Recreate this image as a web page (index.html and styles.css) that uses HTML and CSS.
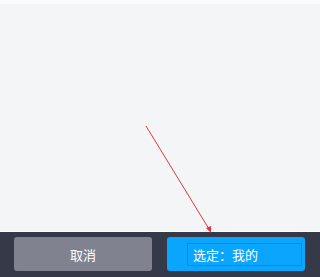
FILE: index.html
```html
<!DOCTYPE html>
<html>
<head>
<meta charset="utf-8">
<link rel="stylesheet" href="styles.css">
</head>
<body>
<div class="screen">
  <div class="topline"></div>
  <div class="content"></div>
  <div class="bar">
    <button class="btn cancel">取消</button>
    <button class="btn select"><span class="label">选定：我的</span></button>
  </div>
  <svg class="arrow" width="320" height="277" viewBox="0 0 320 277">
    <line x1="146" y1="126" x2="209" y2="229" stroke="#e0383e" stroke-width="1"/>
    <polygon points="211,233 206,228 211,226" fill="#e0383e"/>
  </svg>
</div>
</body>
</html>
```
FILE: styles.css
```css
html, body {
  margin: 0;
  padding: 0;
}
body {
  width: 320px;
  height: 277px;
  overflow: hidden;
  font-family: "Noto Sans CJK SC", "Noto Sans", sans-serif;
}
.screen {
  position: relative;
  width: 320px;
  height: 277px;
  display: flex;
  flex-direction: column;
  background: #f4f5f7;
}
.topline {
  height: 4px;
  background: #fbfbfc;
}
.content {
  flex: 1;
  background: #f4f5f7;
  border-bottom: 1px solid #ffffff;
}
.bar {
  height: 45px;
  background: #363a48;
  display: grid;
  grid-template-columns: 1fr 1fr;
  gap: 15px;
  padding: 5px 15px 6px 14px;
  box-sizing: border-box;
}
.btn {
  min-width: 0;
  border: none;
  border-radius: 3px;
  color: #ffffff;
  font-family: "Noto Sans CJK SC", "Noto Sans", sans-serif;
  font-size: 13px;
  padding: 0;
  display: flex;
  align-items: center;
}
.cancel {
  background: #80838f;
  justify-content: center;
}
.select {
  background: #0aa5fd;
  padding-left: 20px;
}
.label {
  display: block;
  border: 1px solid #c8405c;
  width: 108px;
  height: 21px;
  line-height: 21px;
  padding-left: 5px;
  text-align: left;
}
.arrow {
  position: absolute;
  left: 0;
  top: 0;
  pointer-events: none;
}
```
